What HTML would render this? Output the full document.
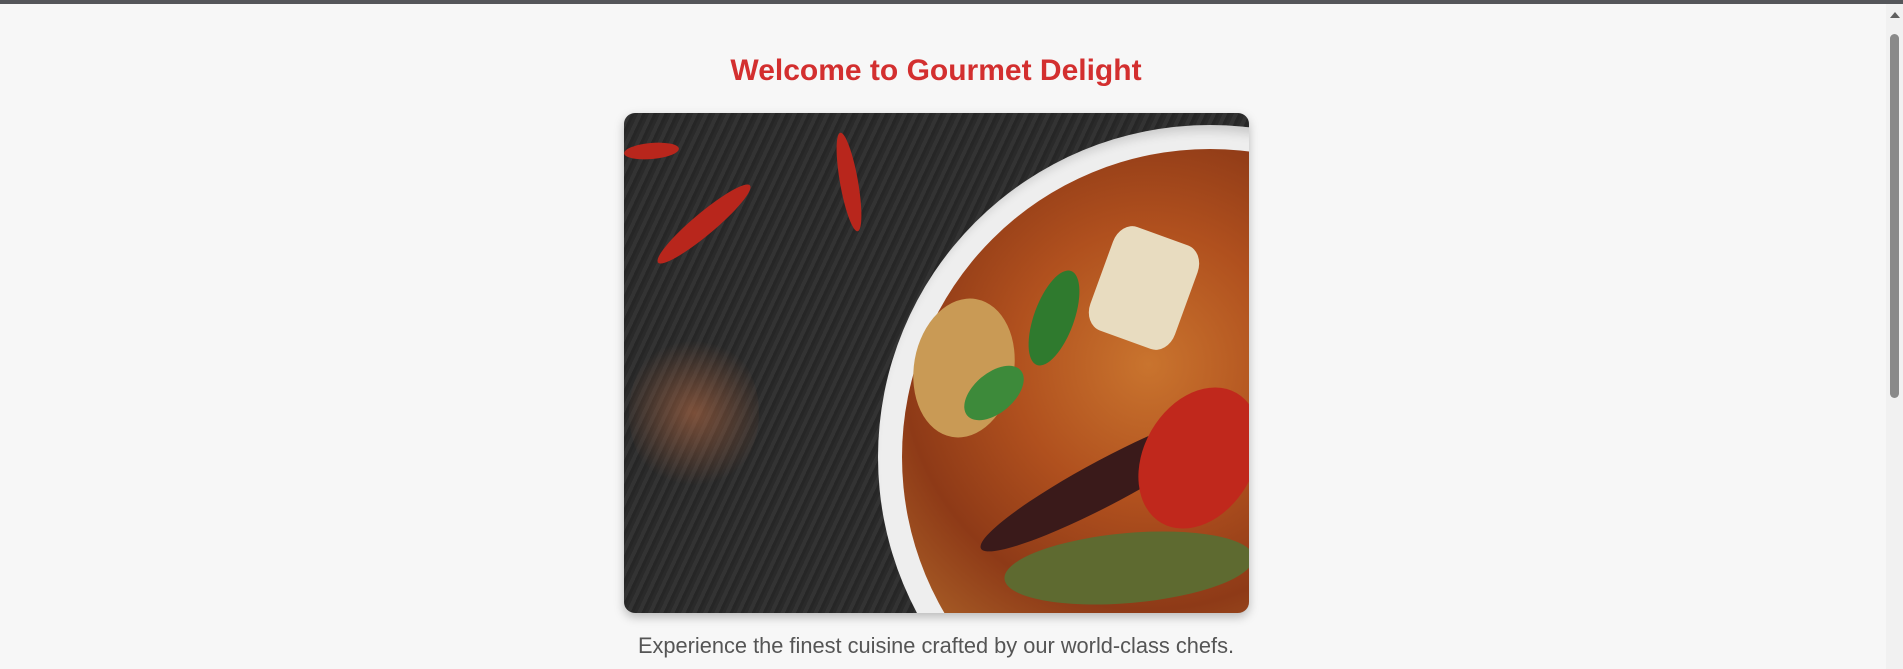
<!DOCTYPE html>
<html><head><meta charset="utf-8"><style>
html,body{margin:0;padding:0;}
body{width:1903px;height:669px;overflow:hidden;background:#f7f7f7;font-family:"Liberation Sans",Arial,sans-serif;position:relative;}
.topbar{position:absolute;left:0;top:0;width:1903px;height:4px;background:#55565a;}
.sb{position:absolute;right:0;top:4px;width:17px;height:665px;background:#f1f1f1;}
.thumb{position:absolute;left:4px;top:30px;width:9px;height:364px;background:#8a8a8a;border-radius:5px;}
.arrow{position:absolute;left:4px;top:8px;width:0;height:0;border-left:5px solid transparent;border-right:5px solid transparent;border-bottom:6px solid #606060;}
h1{position:absolute;left:0;width:1872px;top:55px;margin:0;text-align:center;color:#d32f2f;font-size:30px;font-weight:bold;line-height:32px;}
.img{position:absolute;left:624px;top:113px;width:625px;height:500px;border-radius:11px;overflow:hidden;box-shadow:0 4px 10px rgba(0,0,0,.25);
background:repeating-linear-gradient(115deg,#2a2a2a 0 3px,#333 3px 7px,#262626 7px 10px),#2d2d2d;}
.bowl{position:absolute;left:254px;top:12px;width:664px;height:664px;border-radius:50%;background:#eeeeee;box-shadow:inset -6px 6px 10px rgba(0,0,0,.15);}
.curry{position:absolute;left:278px;top:36px;width:616px;height:616px;border-radius:50%;
background:radial-gradient(circle at 40% 35%,#c9742e 0,#b0501e 25%,#8e3a17 45%,#a55a25 60%,#c17a35 75%,#9a4a1c 100%);}
.p{position:absolute;border-radius:50%;}
p{position:absolute;left:0;width:1872px;top:634px;margin:0;text-align:center;color:#555;font-size:21.8px;line-height:24px;}
</style></head><body>
<div class="topbar"></div>
<h1>Welcome to Gourmet Delight</h1>
<div class="img">
  <div class="bowl"></div>
  <div class="curry"></div>
  <div class="p" style="left:290px;top:185px;width:100px;height:140px;background:#c99a55;transform:rotate(10deg)"></div>
  <div class="p" style="left:475px;top:120px;width:90px;height:110px;background:#e8dcc0;border-radius:20%;transform:rotate(20deg)"></div>
  <div class="p" style="left:335px;top:260px;width:70px;height:40px;background:#3d8a3a;transform:rotate(-40deg)"></div>
  <div class="p" style="left:410px;top:155px;width:40px;height:100px;background:#2f7a2e;transform:rotate(20deg)"></div>
  <div class="p" style="left:340px;top:345px;width:290px;height:45px;background:#3a1a1a;transform:rotate(-28deg)"></div>
  <div class="p" style="left:520px;top:270px;width:110px;height:150px;background:#c0281c;transform:rotate(30deg)"></div>
  <div class="p" style="left:380px;top:420px;width:250px;height:70px;background:#5e6a30;transform:rotate(-5deg)"></div>
  <div class="p" style="left:20px;top:100px;width:120px;height:22px;background:#b8261c;transform:rotate(-40deg)"></div>
  <div class="p" style="left:175px;top:60px;width:100px;height:18px;background:#b8261c;transform:rotate(80deg)"></div>
  <div class="p" style="left:0;top:30px;width:55px;height:16px;background:#b8261c;transform:rotate(-5deg)"></div>
  <div class="p" style="left:5px;top:220px;width:130px;height:160px;background:radial-gradient(circle,rgba(190,110,70,.55),rgba(0,0,0,0) 70%);"></div>
</div>
<p>Experience the finest cuisine crafted by our world-class chefs.</p>
<div class="sb"><div class="arrow"></div><div class="thumb"></div></div>
</body></html>
